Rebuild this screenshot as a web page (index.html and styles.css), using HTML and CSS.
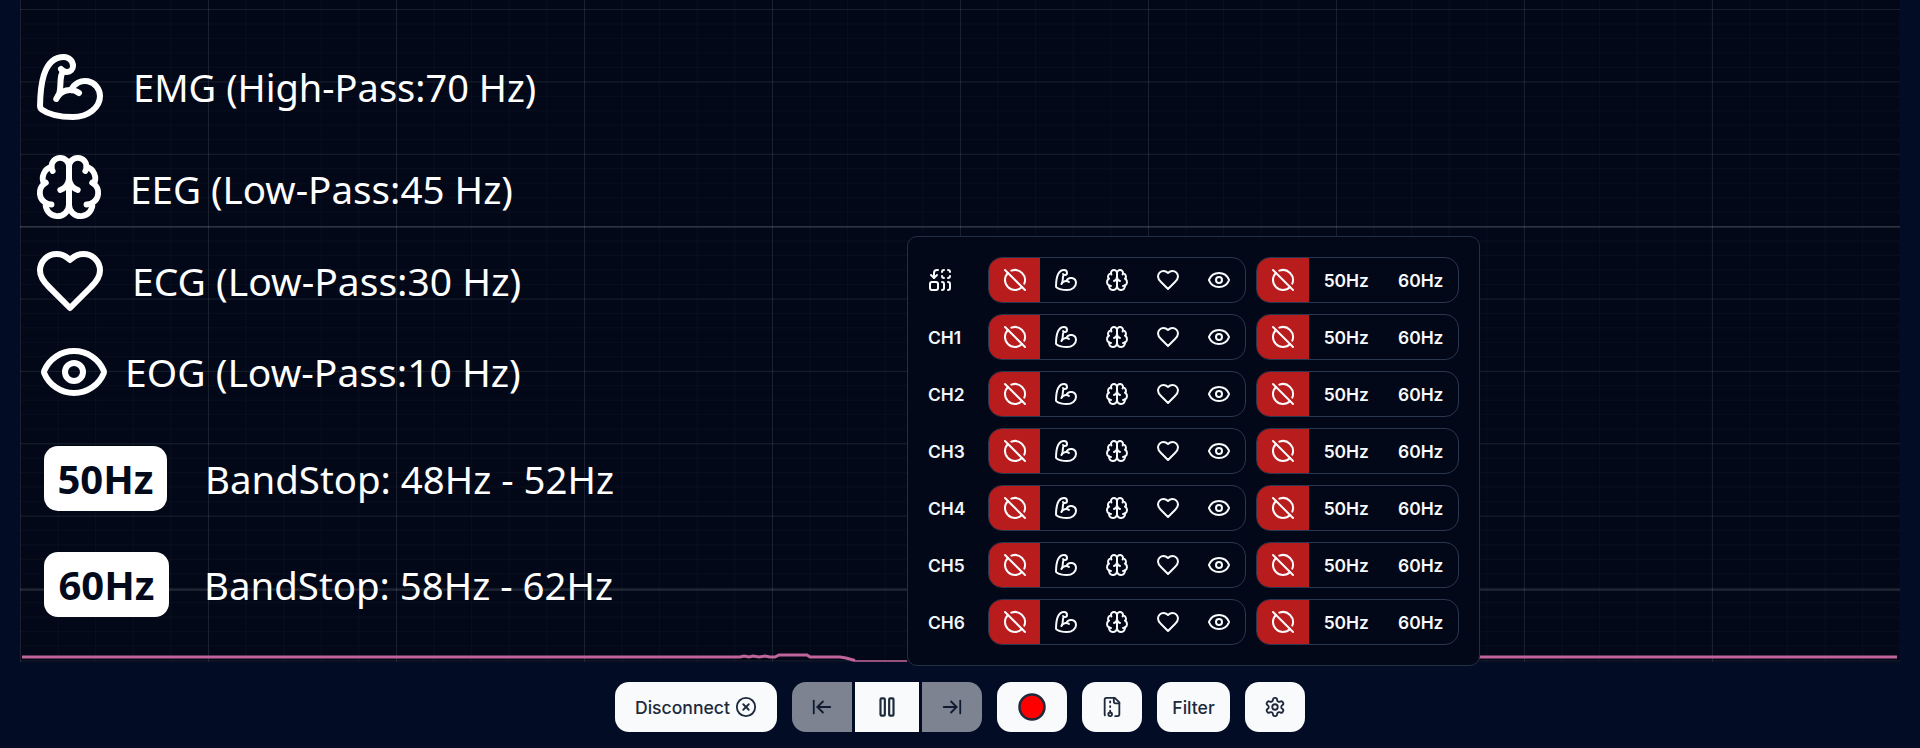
FILE: index.html
```html
<!DOCTYPE html>
<html lang="en">
<head>
<meta charset="utf-8">
<title>Chords</title>
<link rel="stylesheet" href="styles.css">
</head>
<body>
<svg class="defs" width="0" height="0" aria-hidden="true">
  <symbol id="off" viewBox="0 0 24 24"><path d="m2 2 20 20"/><path d="M8.35 2.69A10 10 0 0 1 21.3 15.65"/><path d="M19.08 19.08A10 10 0 1 1 4.92 4.92"/></symbol>
  <symbol id="muscle" viewBox="0 0 24 24"><path d="M12.409 13.017A5 5 0 0 1 22 15c0 3.866-4 7-9 7-4.077 0-8.153-.82-10.371-2.462-.426-.316-.631-.832-.62-1.362C2.118 12.723 2.627 2 10 2a3 3 0 0 1 3 3 2 2 0 0 1-2 2c-1.105 0-1.64-.444-2-1"/><path d="M15 14a5 5 0 0 0-7.584 2"/><path d="M9.964 6.825C8.019 7.977 9.5 13 8 15"/></symbol>
  <symbol id="brain" viewBox="0 0 24 24"><path d="M12 5a3 3 0 1 0-5.997.125 4 4 0 0 0-2.526 5.77 4 4 0 0 0 .556 6.588A4 4 0 1 0 12 18Z"/><path d="M12 5a3 3 0 1 1 5.997.125 4 4 0 0 1 2.526 5.77 4 4 0 0 1-.556 6.588A4 4 0 1 1 12 18Z"/><path d="M15 13a4.5 4.5 0 0 1-3-4 4.5 4.5 0 0 1-3 4"/><path d="M17.599 6.5a3 3 0 0 0 .399-1.375"/><path d="M6.003 5.125A3 3 0 0 0 6.401 6.5"/><path d="M3.477 10.896a4 4 0 0 1 .585-.396"/><path d="M19.938 10.5a4 4 0 0 1 .585.396"/><path d="M6 18a4 4 0 0 1-1.967-.516"/><path d="M19.967 17.484A4 4 0 0 1 18 18"/></symbol>
  <symbol id="heart" viewBox="0 0 24 24"><path d="M19 14c1.49-1.46 3-3.21 3-5.5A5.5 5.5 0 0 0 16.5 3c-1.76 0-3 .5-4.5 2-1.5-1.5-2.74-2-4.5-2A5.5 5.5 0 0 0 2 8.5c0 2.3 1.5 4.05 3 5.5l7 7Z"/></symbol>
  <symbol id="eye" viewBox="0 0 24 24"><path d="M2.062 12.348a1 1 0 0 1 0-.696 10.75 10.75 0 0 1 19.876 0 1 1 0 0 1 0 .696 10.75 10.75 0 0 1-19.876 0"/><circle cx="12" cy="12" r="3"/></symbol>
  <symbol id="replace" viewBox="0 0 24 24"><path d="M14 14a2 2 0 0 1 2 2v4a2 2 0 0 1-2 2"/><path d="M20 14a2 2 0 0 1 2 2v4a2 2 0 0 1-2 2"/><path d="M14 4a2 2 0 0 1 2-2"/><path d="M16 10a2 2 0 0 1-2-2"/><path d="M20 2a2 2 0 0 1 2 2"/><path d="M22 8a2 2 0 0 1-2 2"/><path d="m3 7 3 3 3-3"/><path d="M6 10V5a3 3 0 0 1 3-3h1"/><rect x="2" y="14" width="8" height="8" rx="2"/></symbol>
  <symbol id="xcircle" viewBox="0 0 24 24"><circle cx="12" cy="12" r="10"/><path d="m15 9-6 6"/><path d="m9 9 6 6"/></symbol>
  <symbol id="back" viewBox="0 0 24 24"><path d="M3 19V5"/><path d="m13 6-6 6 6 6"/><path d="M7 12h14"/></symbol>
  <symbol id="forward" viewBox="0 0 24 24"><path d="M17 12H3"/><path d="m11 18 6-6-6-6"/><path d="M21 5v14"/></symbol>
  <symbol id="pause" viewBox="0 0 24 24"><rect x="14" y="4" width="4" height="16" rx="1"/><rect x="6" y="4" width="4" height="16" rx="1"/></symbol>
  <symbol id="archive" viewBox="0 0 24 24"><path d="M10 12v-1"/><path d="M10 18v-2"/><path d="M10 7V6"/><path d="M14 2v4a2 2 0 0 0 2 2h4"/><path d="M15.5 22H18a2 2 0 0 0 2-2V7l-5-5H6a2 2 0 0 0-2 2v16a2 2 0 0 0 .274 1.01"/><circle cx="10" cy="20" r="2"/></symbol>
  <symbol id="gear" viewBox="0 0 24 24"><path d="M12.22 2h-.44a2 2 0 0 0-2 2v.18a2 2 0 0 1-1 1.73l-.43.25a2 2 0 0 1-2 0l-.15-.08a2 2 0 0 0-2.73.73l-.22.38a2 2 0 0 0 .73 2.73l.15.1a2 2 0 0 1 1 1.72v.51a2 2 0 0 1-1 1.74l-.15.09a2 2 0 0 0-.73 2.73l.22.38a2 2 0 0 0 2.73.73l.15-.08a2 2 0 0 1 2 0l.43.25a2 2 0 0 1 1 1.73V20a2 2 0 0 0 2 2h.44a2 2 0 0 0 2-2v-.18a2 2 0 0 1 1-1.73l.43-.25a2 2 0 0 1 2 0l.15.08a2 2 0 0 0 2.73-.73l.22-.39a2 2 0 0 0-.73-2.73l-.15-.08a2 2 0 0 1-1-1.74v-.5a2 2 0 0 1 1-1.74l.15-.09a2 2 0 0 0 .73-2.73l-.22-.38a2 2 0 0 0-2.73-.73l-.15.08a2 2 0 0 1-2 0l-.43-.25a2 2 0 0 1-1-1.73V4a2 2 0 0 0-2-2z"/><circle cx="12" cy="12" r="3"/></symbol>
</svg>

<main class="app">
  <section class="plot">
    <svg class="wave" viewBox="0 0 1880 662" aria-hidden="true">
      <polyline class="wave-thick" points="2,657 720,657 724,656 729,657 733,656 739,657 745,656 750,657 755,657 759,655 787,655 790,657 820,657 826,658 835,660.5"/>
      <polyline class="wave-thin" points="835,661 887,661"/>
      <polyline class="wave-thick" points="1459,657 1877,657"/>
    </svg>

    <div class="legend">
      <div class="legend-row row-emg"><svg class="legend-icon icon-emg"><use href="#muscle"/></svg><span>EMG (High-Pass:70 Hz)</span></div>
      <div class="legend-row row-eeg"><svg class="legend-icon icon-eeg"><use href="#brain"/></svg><span>EEG (Low-Pass:45 Hz)</span></div>
      <div class="legend-row row-ecg"><svg class="legend-icon icon-ecg"><use href="#heart"/></svg><span>ECG (Low-Pass:30 Hz)</span></div>
      <div class="legend-row row-eog"><svg class="legend-icon icon-eog"><use href="#eye"/></svg><span>EOG (Low-Pass:10 Hz)</span></div>
      <div class="legend-row row-50"><b class="badge">50Hz</b><span>BandStop: 48Hz - 52Hz</span></div>
      <div class="legend-row row-60"><b class="badge badge-wide">60Hz</b><span>BandStop: 58Hz - 62Hz</span></div>
    </div>

    <div class="filters">
      <div class="filter-row">
        <svg class="ico label-icon"><use href="#replace"/></svg>
        <div class="seg seg-a"><button class="cell on"><svg class="ico"><use href="#off"/></svg></button><button class="cell"><svg class="ico"><use href="#muscle"/></svg></button><button class="cell"><svg class="ico"><use href="#brain"/></svg></button><button class="cell"><svg class="ico"><use href="#heart"/></svg></button><button class="cell"><svg class="ico"><use href="#eye"/></svg></button></div>
        <div class="seg seg-b"><button class="cell on"><svg class="ico"><use href="#off"/></svg></button><button class="cell hz">50Hz</button><button class="cell hz">60Hz</button></div>
      </div>
      <div class="filter-row">
        <span class="ch">CH1</span>
        <div class="seg seg-a"><button class="cell on"><svg class="ico"><use href="#off"/></svg></button><button class="cell"><svg class="ico"><use href="#muscle"/></svg></button><button class="cell"><svg class="ico"><use href="#brain"/></svg></button><button class="cell"><svg class="ico"><use href="#heart"/></svg></button><button class="cell"><svg class="ico"><use href="#eye"/></svg></button></div>
        <div class="seg seg-b"><button class="cell on"><svg class="ico"><use href="#off"/></svg></button><button class="cell hz">50Hz</button><button class="cell hz">60Hz</button></div>
      </div>
      <div class="filter-row">
        <span class="ch">CH2</span>
        <div class="seg seg-a"><button class="cell on"><svg class="ico"><use href="#off"/></svg></button><button class="cell"><svg class="ico"><use href="#muscle"/></svg></button><button class="cell"><svg class="ico"><use href="#brain"/></svg></button><button class="cell"><svg class="ico"><use href="#heart"/></svg></button><button class="cell"><svg class="ico"><use href="#eye"/></svg></button></div>
        <div class="seg seg-b"><button class="cell on"><svg class="ico"><use href="#off"/></svg></button><button class="cell hz">50Hz</button><button class="cell hz">60Hz</button></div>
      </div>
      <div class="filter-row">
        <span class="ch">CH3</span>
        <div class="seg seg-a"><button class="cell on"><svg class="ico"><use href="#off"/></svg></button><button class="cell"><svg class="ico"><use href="#muscle"/></svg></button><button class="cell"><svg class="ico"><use href="#brain"/></svg></button><button class="cell"><svg class="ico"><use href="#heart"/></svg></button><button class="cell"><svg class="ico"><use href="#eye"/></svg></button></div>
        <div class="seg seg-b"><button class="cell on"><svg class="ico"><use href="#off"/></svg></button><button class="cell hz">50Hz</button><button class="cell hz">60Hz</button></div>
      </div>
      <div class="filter-row">
        <span class="ch">CH4</span>
        <div class="seg seg-a"><button class="cell on"><svg class="ico"><use href="#off"/></svg></button><button class="cell"><svg class="ico"><use href="#muscle"/></svg></button><button class="cell"><svg class="ico"><use href="#brain"/></svg></button><button class="cell"><svg class="ico"><use href="#heart"/></svg></button><button class="cell"><svg class="ico"><use href="#eye"/></svg></button></div>
        <div class="seg seg-b"><button class="cell on"><svg class="ico"><use href="#off"/></svg></button><button class="cell hz">50Hz</button><button class="cell hz">60Hz</button></div>
      </div>
      <div class="filter-row">
        <span class="ch">CH5</span>
        <div class="seg seg-a"><button class="cell on"><svg class="ico"><use href="#off"/></svg></button><button class="cell"><svg class="ico"><use href="#muscle"/></svg></button><button class="cell"><svg class="ico"><use href="#brain"/></svg></button><button class="cell"><svg class="ico"><use href="#heart"/></svg></button><button class="cell"><svg class="ico"><use href="#eye"/></svg></button></div>
        <div class="seg seg-b"><button class="cell on"><svg class="ico"><use href="#off"/></svg></button><button class="cell hz">50Hz</button><button class="cell hz">60Hz</button></div>
      </div>
      <div class="filter-row">
        <span class="ch">CH6</span>
        <div class="seg seg-a"><button class="cell on"><svg class="ico"><use href="#off"/></svg></button><button class="cell"><svg class="ico"><use href="#muscle"/></svg></button><button class="cell"><svg class="ico"><use href="#brain"/></svg></button><button class="cell"><svg class="ico"><use href="#heart"/></svg></button><button class="cell"><svg class="ico"><use href="#eye"/></svg></button></div>
        <div class="seg seg-b"><button class="cell on"><svg class="ico"><use href="#off"/></svg></button><button class="cell hz">50Hz</button><button class="cell hz">60Hz</button></div>
      </div>
    </div>
  </section>

  <footer class="toolbar">
    <button class="btn btn-disconnect">Disconnect <svg class="ico"><use href="#xcircle"/></svg></button>
    <div class="transport">
      <button class="btn step"><svg class="ico"><use href="#back"/></svg></button>
      <button class="btn play"><svg class="ico ico-lg"><use href="#pause"/></svg></button>
      <button class="btn step"><svg class="ico"><use href="#forward"/></svg></button>
    </div>
    <button class="btn btn-record"><svg class="rec" viewBox="0 0 24 24"><circle cx="12" cy="12" r="10"/></svg></button>
    <button class="btn btn-square"><svg class="ico"><use href="#archive"/></svg></button>
    <button class="btn btn-filter">Filter</button>
    <button class="btn btn-square"><svg class="ico"><use href="#gear"/></svg></button>
  </footer>
</main>
</body>
</html>
```

FILE: styles.css
```css
* { box-sizing: border-box; }
html, body { margin: 0; height: 100%; }
body {
  background: #030c25;
  color: #f8fafc;
  font-family: Inter, "Liberation Sans", sans-serif;
  overflow: hidden;
}
.defs { position: absolute; }
symbol, .ico, .legend-icon {
  fill: none;
  stroke: currentColor;
  stroke-width: 2;
  stroke-linecap: round;
  stroke-linejoin: round;
}
.app { display: flex; flex-direction: column; height: 748px; }

.plot {
  position: relative;
  height: 662px;
  margin: 0 20px;
  background-color: #020817;
  background-image:
    linear-gradient(rgba(255,255,255,.1), rgba(255,255,255,.1)),
    linear-gradient(rgba(255,255,255,.1), rgba(255,255,255,.1)),
    linear-gradient(to right, rgba(255,255,255,.08) 1px, transparent 1px),
    linear-gradient(to bottom, rgba(255,255,255,.07) 1px, transparent 1px),
    linear-gradient(to right, rgba(255,255,255,.022) 1px, transparent 1px),
    linear-gradient(to bottom, rgba(255,255,255,.022) 1px, transparent 1px);
  background-size: 100% 2px, 100% 2px, 188px 100%, 100% 72.4px, 37.6px 100%, 100% 14.48px;
  background-position: 0 226px, 0 589px, 0 0, 0 9px, 0 0, 0 9px;
  background-repeat: no-repeat, no-repeat, repeat, repeat, repeat, repeat;
}
.wave { position: absolute; inset: 0; width: 100%; height: 100%; fill: none; }
.wave-thick { stroke: #bf659b; stroke-width: 3; }
.wave-thin { stroke: #c6659c; stroke-width: 1.6; }

/* Legend overlay */
.legend {
  position: absolute;
  top: 53px;
  left: 16px;
  display: flex;
  flex-direction: column;
  font-family: "Noto Sans", sans-serif;
  line-height: 44px;
  color: #fff;
}
.legend-row { display: flex; align-items: center; }
.legend-icon { flex: none; }
.icon-emg { width: 72px; height: 72px; margin: 0 27px 0 -2px; stroke-width: 2.2; }
.icon-eeg { width: 70px; height: 70px; margin: 0 26px 0 -2px; stroke-width: 2.2; }
.icon-ecg { width: 72px; height: 72px; margin: 0 26px 0 -2px; stroke-width: 1.9; }
.icon-eog { width: 72px; height: 72px; margin: 0 15px 0 2px; stroke-width: 1.9; }
.row-emg { height: 68px; font-size: 38px; }
.row-eeg { height: 66px; margin-top: 33px; font-size: 38.6px; }
.row-eeg span { padding-top: 4px; }
.row-ecg { height: 60px; margin-top: 31px; font-size: 39px; }
.row-eog { height: 46px; margin-top: 38px; font-size: 39px; }
.row-50 { margin-top: 51px; font-size: 38.4px; }
.row-60 { margin-top: 41px; font-size: 38.4px; }
.badge {
  width: 123px;
  height: 65px;
  margin: 0 38px 0 8px;
  display: flex;
  align-items: center;
  justify-content: center;
  background: #fff;
  color: #030a1c;
  border-radius: 14px;
  font-size: 40px;
  font-weight: 700;
}
.badge-wide { width: 125px; margin-right: 35px; }

/* Filter panel overlay */
.filters {
  position: absolute;
  top: 236px;
  left: 887px;
  width: 573px;
  padding: 20px;
  display: flex;
  flex-direction: column;
  gap: 11px;
  background: #020817;
  border: 1px solid #232f45;
  border-radius: 10px;
}
.filter-row { display: flex; align-items: center; height: 46px; }
.label-icon { width: 24px; height: 24px; flex: none; margin-right: 36px; }
.ch { width: 60px; flex: none; font-size: 17.4px; font-weight: 600; color: #f1f5f9; }
.seg {
  display: flex;
  height: 46px;
  border: 1px solid #293750;
  border-radius: 14px;
  overflow: hidden;
  flex: none;
}
.seg-a { width: 258px; margin-right: 10px; }
.seg-b { width: 203px; }
.cell {
  flex: 1 1 0;
  display: flex;
  align-items: center;
  justify-content: center;
  padding: 0;
  border: 0;
  background: transparent;
  color: #f8fafc;
  font: 600 17.4px Inter, sans-serif;
}
.cell.on { background: #b91c1c; }
.seg-b .cell.on { flex: 0 0 52px; }
.cell .ico { width: 24px; height: 24px; }

/* Toolbar */
.toolbar {
  flex: 1;
  display: flex;
  align-items: center;
  justify-content: center;
  gap: 15px;
  padding-top: 4px;
}
.btn {
  height: 50px;
  display: flex;
  align-items: center;
  justify-content: center;
  border: 0;
  padding: 0;
  background: #f8fafc;
  color: #1e293b;
  border-radius: 14px;
  font: 500 17.6px Inter, sans-serif;
}
.btn .ico { width: 22px; height: 22px; }
.btn-disconnect { width: 162px; gap: 5px; }
.transport { display: flex; gap: 3px; }
.transport .step { width: 60px; opacity: .5; border-radius: 14px 0 0 14px; }
.transport .step:last-child { border-radius: 0 14px 14px 0; }
.transport .play { width: 64px; border-radius: 0; }
.btn .ico-lg { width: 26px; height: 26px; }
.btn-record { width: 70px; }
.rec { width: 30px; height: 30px; fill: #f00; stroke: #1e293b; stroke-width: 2; }
.btn-square { width: 60px; }
.btn-filter { width: 73px; }
```
